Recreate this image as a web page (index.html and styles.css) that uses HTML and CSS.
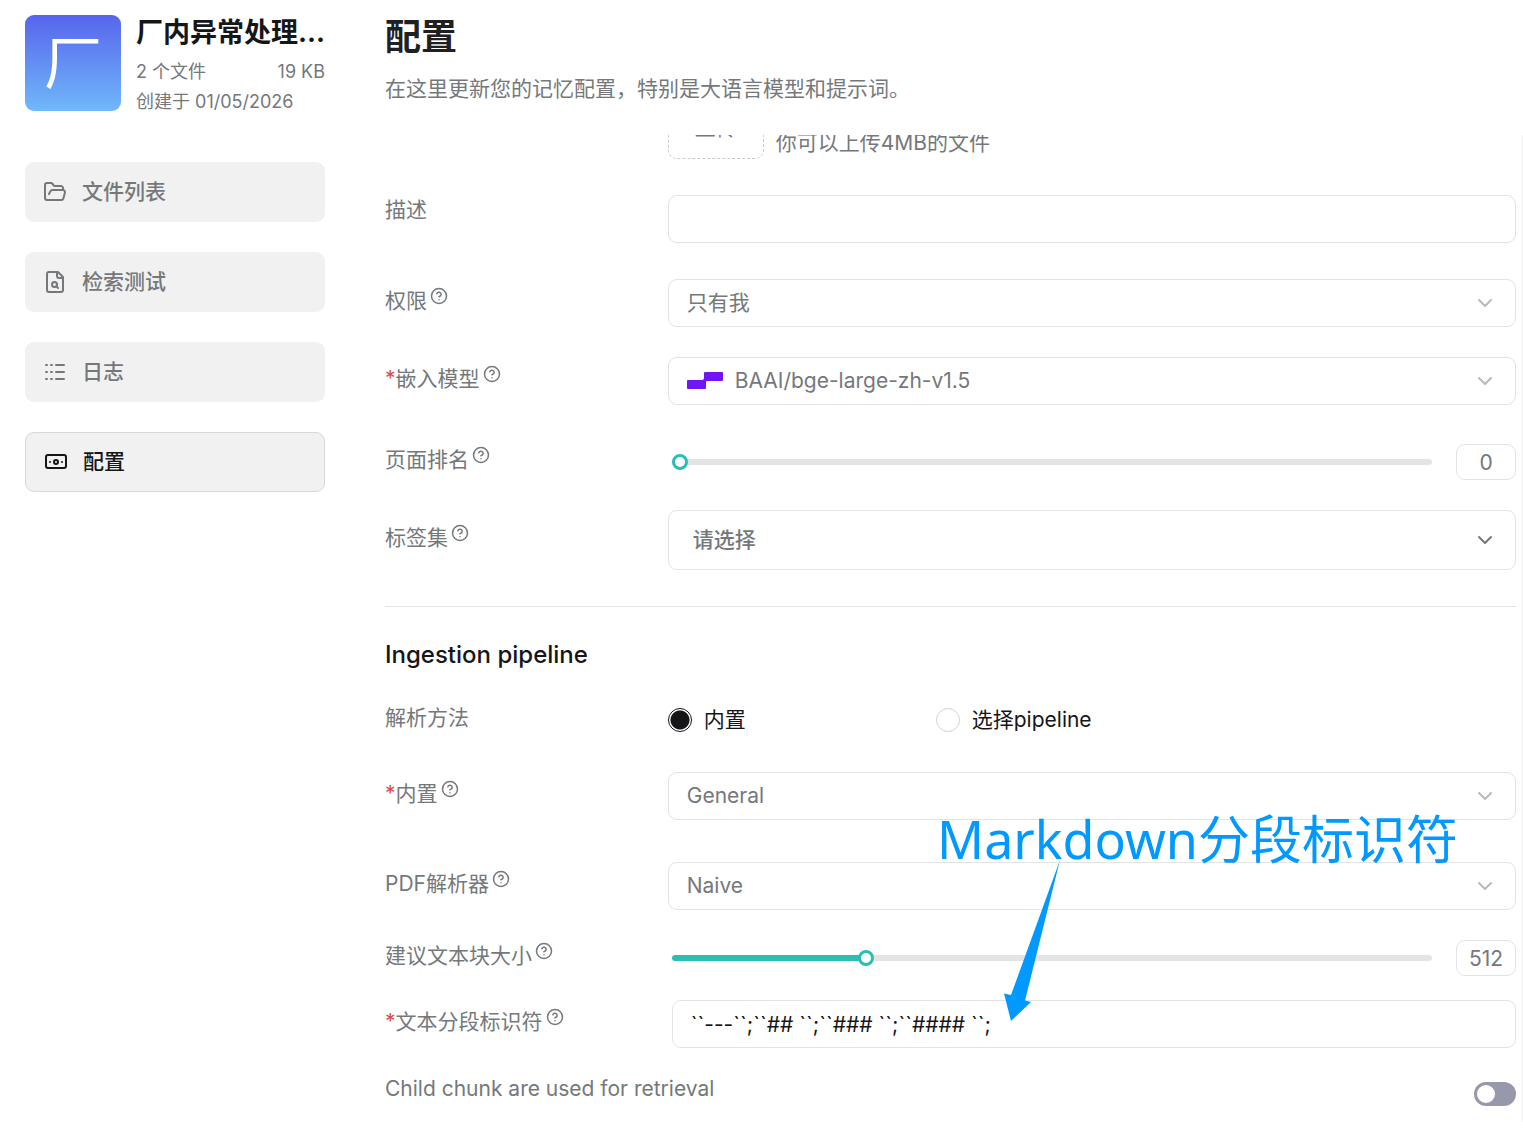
FILE: index.html
```html
<!DOCTYPE html>
<html lang="zh-CN">
<head>
<meta charset="utf-8">
<meta name="viewport" content="width=device-width, initial-scale=1">
<title>配置</title>
<link rel="stylesheet" href="styles.css">
</head>
<body>
<svg class="sprite" aria-hidden="true">
  <symbol id="help" viewBox="0 0 24 24"><circle cx="12" cy="12" r="10"/><path d="M9.09 9a3 3 0 0 1 5.83 1c0 2-3 3-3 3"/><path d="M12 17h.01"/></symbol>
  <symbol id="chevron" viewBox="0 0 24 24"><path d="m6 9 6 6 6-6"/></symbol>
</svg>
<div class="app">
  <aside class="sidebar">
    <div class="dataset">
      <div class="avatar">厂</div>
      <div class="dataset-info">
        <h2 class="dataset-name">厂内异常处理...</h2>
        <div class="dataset-meta"><span>2 个文件</span><span>19 KB</span></div>
        <div class="dataset-meta">创建于 01/05/2026</div>
      </div>
    </div>
    <nav class="nav">
      <a class="nav-item" href="#files"><svg class="icon" viewBox="0 0 24 24"><path d="m6 14 1.5-2.9A2 2 0 0 1 9.24 10H20a2 2 0 0 1 1.94 2.5l-1.54 6a2 2 0 0 1-1.95 1.5H4a2 2 0 0 1-2-2V5a2 2 0 0 1 2-2h3.9a2 2 0 0 1 1.69.9l.81 1.2a2 2 0 0 0 1.67.9H18a2 2 0 0 1 2 2v2"/></svg>文件列表</a>
      <a class="nav-item" href="#test"><svg class="icon" viewBox="0 0 24 24"><path d="M15 2H6a2 2 0 0 0-2 2v16a2 2 0 0 0 2 2h12a2 2 0 0 0 2-2V7Z"/><path d="M14 2v4a2 2 0 0 0 2 2h4"/><circle cx="11.5" cy="14.5" r="2.5"/><path d="M13.3 16.3 15 18"/></svg>检索测试</a>
      <a class="nav-item" href="#logs"><svg class="icon" viewBox="0 0 24 24"><path d="M3 5h1M8 5h1M13 5h8M3 12h1M8 12h1M13 12h8M3 19h1M8 19h1M13 19h8"/></svg>日志</a>
      <a class="nav-item nav-item--active" href="#config" aria-current="page"><svg class="icon" viewBox="0 0 24 24"><rect x="2" y="5" width="20" height="13" rx="2"/><circle cx="12" cy="12" r="2"/><path d="M6 12h.01M18 12h.01"/></svg>配置</a>
    </nav>
  </aside>

  <main class="main">
    <header class="page-head">
      <h1 class="page-title">配置</h1>
      <p class="page-desc">在这里更新您的记忆配置，特别是大语言模型和提示词。</p>
    </header>
    <div class="scroll">
      <form class="form">
        <div class="row">
          <span></span>
          <div class="upload">
            <button class="upload-btn" type="button"><svg class="icon" viewBox="0 0 24 24"><path d="M5 12h14M12 5v14"/></svg>上传</button>
            <span class="upload-hint">你可以上传4MB的文件</span>
          </div>
        </div>
        <div class="row row--top gap-36">
          <label class="label" for="desc">描述</label>
          <input class="field" id="desc" type="text">
        </div>
        <div class="row gap-36">
          <label class="label" for="perm">权限<svg class="help"><use href="#help"/></svg></label>
          <div class="picker"><select class="field" id="perm"><option>只有我</option></select><svg class="chevron"><use href="#chevron"/></svg></div>
        </div>
        <div class="row gap-30">
          <label class="label" for="embed"><span class="req">*</span>嵌入模型<svg class="help"><use href="#help"/></svg></label>
          <div class="picker picker--logo"><select class="field" id="embed"><option>BAAI/bge-large-zh-v1.5</option></select><svg class="brand" viewBox="0 0 36 18"><path d="M17 1q0-1 1-1h17q1 0 1 1v7q0 1-1 1H20q-1 0-1 1v6q0 1-1 1H1q-1 0-1-1V9q0-1 1-1h14q2 0 2-2z"/></svg><svg class="chevron"><use href="#chevron"/></svg></div>
        </div>
        <div class="row gap-39">
          <label class="label" for="rank">页面排名<svg class="help"><use href="#help"/></svg></label>
          <div class="slider-row">
            <input class="slider" id="rank" type="range" min="0" max="100" value="0" style="--fill: 0%">
            <input class="number" type="text" value="0" aria-label="页面排名">
          </div>
        </div>
        <div class="row gap-30">
          <label class="label" for="tags">标签集<svg class="help"><use href="#help"/></svg></label>
          <div class="picker picker--tall"><select class="field" id="tags"><option>请选择</option></select><svg class="chevron"><use href="#chevron"/></svg></div>
        </div>
        <hr class="rule gap-36">
        <h2 class="section-title gap-30">Ingestion pipeline</h2>
        <div class="row row--radio gap-30">
          <span class="label">解析方法</span>
          <div class="radios">
            <label class="radio-label"><input class="radio" type="radio" name="method" checked>内置</label>
            <label class="radio-label"><input class="radio" type="radio" name="method">选择pipeline</label>
          </div>
        </div>
        <div class="row gap-36">
          <label class="label" for="builtin"><span class="req">*</span>内置<svg class="help"><use href="#help"/></svg></label>
          <div class="picker"><select class="field" id="builtin"><option>General</option></select><svg class="chevron"><use href="#chevron"/></svg></div>
        </div>
        <div class="row gap-42">
          <label class="label" for="pdf">PDF解析器<svg class="help"><use href="#help"/></svg></label>
          <div class="picker"><select class="field" id="pdf"><option>Naive</option></select><svg class="chevron"><use href="#chevron"/></svg></div>
        </div>
        <div class="row gap-30">
          <label class="label" for="chunk">建议文本块大小<svg class="help"><use href="#help"/></svg></label>
          <div class="slider-row">
            <input class="slider" id="chunk" type="range" min="0" max="2048" value="512" style="--fill: 25%">
            <input class="number" type="text" value="512" aria-label="建议文本块大小">
          </div>
        </div>
        <div class="row gap-24">
          <label class="label" for="delim"><span class="req">*</span>文本分段标识符<svg class="help"><use href="#help"/></svg></label>
          <div class="inset"><input class="field field--dark" id="delim" type="text" value="``---``;``## ``;``### ``;``#### ``;"></div>
        </div>
        <div class="switch-row gap-24">
          <label class="label" for="child">Child chunk are used for retrieval</label>
          <input class="switch" id="child" type="checkbox" role="switch">
        </div>
      </form>
    </div>
  </main>
</div>
<div class="note">Markdown分段标识符</div>
<svg class="arrow" viewBox="0 0 28 162" aria-hidden="true"><path d="M56 0 7 135 0 133.500 7 161 27 142 21 140.500z"/></svg>
</body>
</html>
```

FILE: styles.css
```css
:root {
  --text: #161618;
  --muted: #75787a;
  --line: #e3e3e4;
  --panel: #f1f1f1;
  --accent: #2abeb5;
  --note: #0099ff;
}
* { box-sizing: border-box; }
body {
  margin: 0;
  background: #fff;
  color: var(--muted);
  font: 21px/30px Inter, "Noto Sans CJK SC", sans-serif;
}
h1, h2, p { margin: 0; }
input, select, button { font: inherit; color: inherit; margin: 0; }
.sprite { display: none; }
.icon, .help, .chevron {
  flex: none;
  fill: none;
  stroke: currentColor;
  stroke-width: 2;
  stroke-linecap: round;
  stroke-linejoin: round;
}
.icon { width: 24px; height: 24px; }

.app { display: flex; gap: 60px; height: 100vh; padding: 15px 0 16px 25px; }

/* Sidebar */
.sidebar { flex: none; width: 300px; }
.dataset { display: flex; gap: 15px; }
.avatar {
  display: flex;
  align-items: center;
  justify-content: center;
  flex: none;
  width: 96px;
  height: 96px;
  border-radius: 9px;
  background: linear-gradient(#5765ec, #70b8fb);
  color: #fff;
  font-size: 58px;
  line-height: 96px;
}
.dataset-info { flex: 1; min-width: 0; }
.dataset-name {
  overflow: hidden;
  color: var(--text);
  font-size: 27px;
  font-weight: 700;
  line-height: 36px;
  white-space: nowrap;
}
.dataset-meta { display: flex; justify-content: space-between; font-size: 18px; line-height: 30px; margin-top: 6px; }
.dataset-meta + .dataset-meta { margin-top: 0; }
.nav { display: flex; flex-direction: column; gap: 30px; margin-top: 45px; }
.nav-item {
  display: flex;
  align-items: center;
  gap: 15px;
  height: 60px;
  padding: 0 18px;
  border-radius: 9px;
  background: var(--panel);
  color: var(--muted);
  font-weight: 500;
  text-decoration: none;
}
.nav-item--active { border: 1px solid #d8d8d9; color: var(--text); }

/* Main column */
.main { display: flex; flex: 1; flex-direction: column; min-width: 0; }
.page-title { color: #1e2021; font-size: 36px; font-weight: 700; line-height: 44px; }
.page-desc { margin-top: 15px; }
.scroll { flex: 1; min-height: 0; margin-top: 31px; overflow: hidden; border-right: 1px solid #f0f0f0; }
/* The list is scrolled down past most of the upload tile. */
.form { margin-top: -72px; padding-right: 6px; }

.row { display: grid; grid-template-columns: 1fr 3fr; align-items: center; }
.row--top { align-items: start; }
.row--radio .label { padding-bottom: 3px; }
.gap-24 { margin-top: 24px; }
.gap-30 { margin-top: 30px; }
.gap-36 { margin-top: 36px; }
.gap-39 { margin-top: 39px; }
.gap-42 { margin-top: 42px; }

.label { display: flex; align-items: center; padding-bottom: 4px; }
.row--top .label { padding: 0; }
.req { color: #d94a4a; }
.help { width: 18px; height: 18px; margin: 0 0 10px 3px; }

.field {
  display: block;
  width: 100%;
  height: 48px;
  padding: 0 18px;
  border: 1px solid var(--line);
  border-radius: 9px;
  background: none;
  outline: none;
  appearance: none;
}
.field--dark { color: var(--text); }
.inset { padding-left: 4px; }
.picker { display: grid; align-items: center; }
.picker > * { grid-area: 1 / 1; }
.picker--logo .field { padding-left: 66px; }
.picker--tall .field { height: 60px; padding-left: 24px; font-weight: 500; }
.chevron { justify-self: end; width: 24px; height: 24px; margin-right: 19px; opacity: .5; pointer-events: none; }
.picker--tall .chevron { opacity: 1; }
.brand { width: 36px; height: 18px; margin-left: 19px; fill: #7215f5; pointer-events: none; }

.upload { display: flex; align-items: flex-end; gap: 12px; }
.upload-btn {
  display: flex;
  flex-direction: column;
  align-items: center;
  justify-content: center;
  gap: 10px;
  width: 96px;
  height: 96px;
  border: 1px dashed #c8c9ca;
  border-radius: 9px;
  background: none;
}
.upload-hint { line-height: 32px; }

.slider-row { display: flex; align-items: center; gap: 24px; padding-left: 4px; }
.slider { flex: 1; min-width: 0; height: 16px; background: none; appearance: none; outline: none; }
.slider::-webkit-slider-runnable-track {
  height: 6px;
  border-radius: 3px;
  background: linear-gradient(to right, var(--accent) var(--fill), #e4e4e4 var(--fill));
}
.slider::-webkit-slider-thumb {
  width: 16px;
  height: 16px;
  margin-top: -5px;
  border: 3px solid var(--accent);
  border-radius: 50%;
  background: #fff;
  appearance: none;
}
.number {
  width: 60px;
  height: 36px;
  padding: 0;
  border: 1px solid var(--line);
  border-radius: 9px;
  background: none;
  text-align: center;
}

.rule { height: 1px; margin-bottom: 0; border: 0; background: var(--line); }
.section-title { color: var(--text); font-size: 24px; font-weight: 500; line-height: 36px; }
.radios { display: flex; gap: 12px; color: var(--text); }
.radio-label { display: flex; align-items: center; gap: 12px; min-width: 256px; }
.radio {
  width: 24px;
  height: 24px;
  border: 1px solid #d2d3d4;
  border-radius: 50%;
  background: #fff;
  appearance: none;
}
.radio:checked { border-color: var(--text); background: radial-gradient(circle, var(--text) 9px, #fff 10px); }

.switch-row { display: flex; align-items: center; justify-content: space-between; min-height: 44px; }
.switch-row .label { align-self: flex-start; padding-top: 2px; }
.switch { flex: none; width: 42px; height: 24px; padding: 3px; border-radius: 12px; background: #9798ab; appearance: none; }
.switch::before { content: ""; display: block; width: 18px; height: 18px; border-radius: 50%; background: #fff; }
.switch:checked { background: var(--accent); }

/* Annotation drawn over the form */
.note {
  position: absolute;
  top: 803px;
  left: 937px;
  color: var(--note);
  font: 52px/72px "Noto Sans", "Noto Sans CJK SC", sans-serif;
  white-space: nowrap;
  pointer-events: none;
}
.arrow { position: absolute; top: 860px; left: 1004px; width: 28px; height: 162px; overflow: visible; fill: var(--note); pointer-events: none; }
```
